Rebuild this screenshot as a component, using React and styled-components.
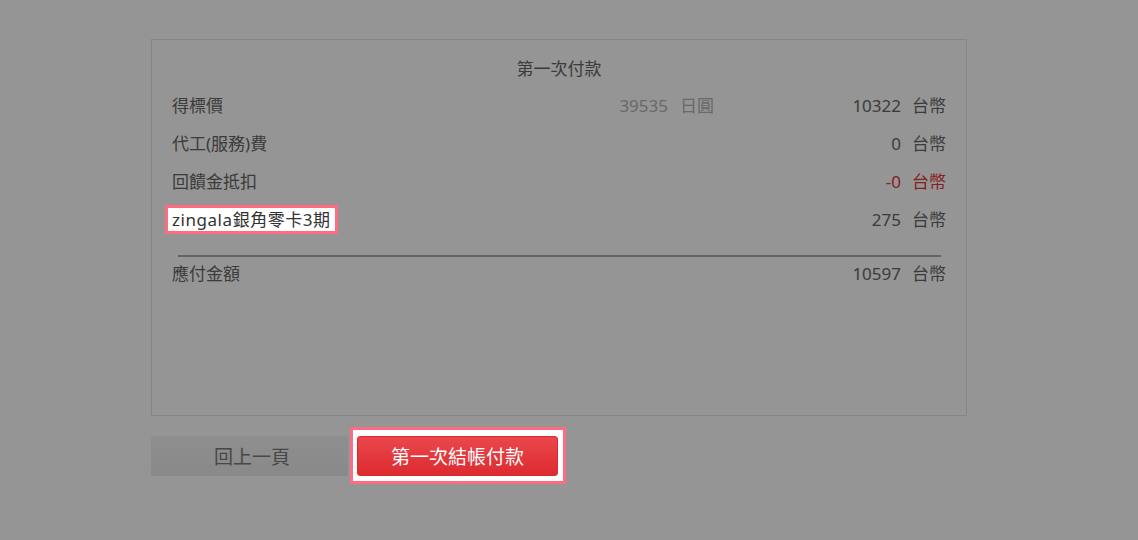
import React from 'react'
import styled, { createGlobalStyle } from 'styled-components'

const GlobalStyle = createGlobalStyle`
  html, body {
    margin: 0;
    padding: 0;
    background: #fff;
    font-family: "Noto Sans", "Noto Sans CJK TC", sans-serif;
  }
`

const Overlay = styled.div`
  position: fixed;
  inset: 0;
  background: rgba(0, 0, 0, 0.415);
  z-index: 10;
`

const Page = styled.div`
  width: 816px;
  padding: 39px 0 0 151px;
`

const Panel = styled.div`
  box-sizing: border-box;
  height: 377px;
  border: 1px solid #e4e4e4;
  padding: 17px 20px 0 20px;
  color: #666;
  font-size: 17px;
  line-height: 24px;
`

const Title = styled.div`
  text-align: center;
  margin-bottom: 6px;
`

const Row = styled.div`
  display: flex;
  align-items: center;
  height: 38px;
`

const Label = styled.div`
  flex: 1;
`

const Spot = styled.span`
  position: relative;
  z-index: 20;
  display: inline-block;
  margin-left: -4px;
  padding: 0 4px;
  line-height: 23px;
  letter-spacing: 0.55px;
  background: #fff;
  color: #333;
  outline: 3px solid #ff6b81;
`

const Foreign = styled.div`
  color: #b4b4b4;
  margin-right: 112px;
  white-space: nowrap;
`

const Amount = styled.div`
  min-width: 120px;
  text-align: right;
  white-space: nowrap;
  color: ${p => (p.$neg ? '#e8353a' : '#666')};
`

const Unit = styled.span`
  margin-left: ${p => (p.$wide ? 12 : 11)}px;
`

const Divider = styled.hr`
  margin: 16px 0 0 6px;
  border: none;
  border-top: 2px solid #aaa;
  width: 763px;
  height: 0;
`

const TotalRow = styled(Row)`
  height: 34px;
`

const Actions = styled.div`
  display: flex;
  align-items: flex-start;
  gap: 2px;
  margin-top: 20px;
`

const BackButton = styled.button`
  width: 197px;
  height: 40px;
  padding: 0 0 0 5px;
  border: none;
  border-radius: 2px;
  background: linear-gradient(#f4f4f4, #ebebeb);
  color: #7a7a7a;
  font-family: inherit;
  font-size: 19px;
`

const Highlight = styled.div`
  position: relative;
  z-index: 20;
  display: flex;
  margin-top: -9px;
  padding: 6px 5px 5px 4px;
  background: #fff;
  border: 3px solid #ff6b81;
`

const PayButton = styled.button`
  width: 201px;
  height: 40px;
  border: 1px solid #d92a30;
  border-radius: 3px;
  background: linear-gradient(#ea474c, #dd2b30);
  color: #fff;
  font-family: inherit;
  font-size: 19px;
`

const lines = [
  { label: '得標價', foreign: '39535', amount: '10322' },
  { label: '代工(服務)費', amount: '0' },
  { label: '回饋金抵扣', amount: '-0', neg: true },
  { label: 'zingala銀角零卡3期', amount: '275', spot: true },
]

export default function App() {
  return (
    <>
      <GlobalStyle />
      <Overlay />
      <Page>
        <Panel>
          <Title>第一次付款</Title>
          {lines.map(l => (
            <Row key={l.label}>
              <Label>{l.spot ? <Spot>{l.label}</Spot> : l.label}</Label>
              {l.foreign && (
                <Foreign>
                  {l.foreign}
                  <Unit $wide>日圓</Unit>
                </Foreign>
              )}
              <Amount $neg={l.neg}>
                {l.amount}
                <Unit>台幣</Unit>
              </Amount>
            </Row>
          ))}
          <Divider />
          <TotalRow>
            <Label>應付金額</Label>
            <Amount>
              10597
              <Unit>台幣</Unit>
            </Amount>
          </TotalRow>
        </Panel>
        <Actions>
          <BackButton>回上一頁</BackButton>
          <Highlight>
            <PayButton>第一次結帳付款</PayButton>
          </Highlight>
        </Actions>
      </Page>
    </>
  )
}
